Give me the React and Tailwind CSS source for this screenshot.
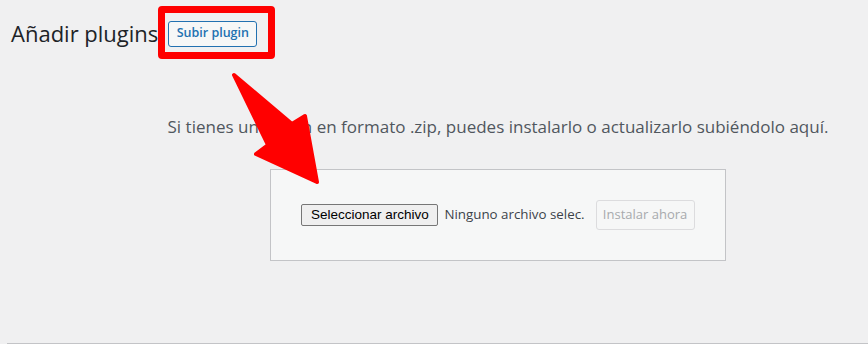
import React from 'react';

const uiFont = { fontFamily: '"Open Sans", "Noto Sans", Arial, sans-serif' };

function Arrow() {
    // red annotation arrow pointing at the upload box
    return (
        <svg className="absolute left-0 top-0 pointer-events-none" width="868" height="344" viewBox="0 0 868 344">
            <polygon
                points="234,75 292,124 305,116 317,182 256,154 268,145"
                fill="#ff0000"
                stroke="#ff0000"
                strokeWidth="4"
                strokeLinejoin="round"
            />
        </svg>
    );
}

export default function App() {
    return (
        <div className="relative w-[868px] h-[344px] overflow-hidden bg-[#f0f0f1]" style={uiFont}>

            {/* Header */}
            <div className="flex items-center pl-[11px] pt-[18px]">
                <h1 className="text-[22px] leading-[30px] text-[#1d2327] font-normal">Añadir plugins</h1>
                <div className="relative ml-[10px]">
                    <button className="h-[26px] w-[89px] rounded-[3px] border border-[#2271b1] bg-[#f6f7f7] text-[#2271b1] text-[12.5px] font-semibold leading-none">
                        Subir plugin
                    </button>
                    <div className="absolute left-[-10px] top-[-13px] w-[117px] h-[53px] border-[7px] border-[#ff0000] rounded-[4px]" />
                </div>
            </div>

            {/* Upload help */}
            <div className="ml-[11px] w-[974px] text-center">
                <p className="pt-[65px] text-[17px] leading-[27px] text-[#50575e]">
                    Si tienes un plugin en formato .zip, puedes instalarlo o actualizarlo subiéndolo aquí.
                </p>
                <div className="mx-auto mt-[29px] w-[456px] h-[92px] border border-[#c3c4c7] bg-[#f6f7f7] flex items-center justify-center">
                    <div className="flex items-center">
                        <span className="h-[22px] w-[137px] justify-center flex items-center border border-[#767676] rounded-[2px] bg-[#efefef] text-black text-[13.5px]" style={{ fontFamily: '"Liberation Sans", Arial, sans-serif' }}>
                            Seleccionar archivo
                        </span>
                        <span className="ml-[6px] text-[13.33px] text-[#3c434a]">Ninguno archivo selec.</span>
                        <button disabled className="ml-[11px] h-[30px] w-[99px] rounded-[3px] border border-[#dcdcde] bg-[#f6f7f7] text-[#a7aaad] text-[13px]">
                            Instalar ahora
                        </button>
                    </div>
                </div>
            </div>

            {/* Bottom rule */}
            <div className="absolute left-[7px] right-0 bottom-0 h-px bg-[#c3c4c7]" />

            <Arrow />
        </div>
    );
}
